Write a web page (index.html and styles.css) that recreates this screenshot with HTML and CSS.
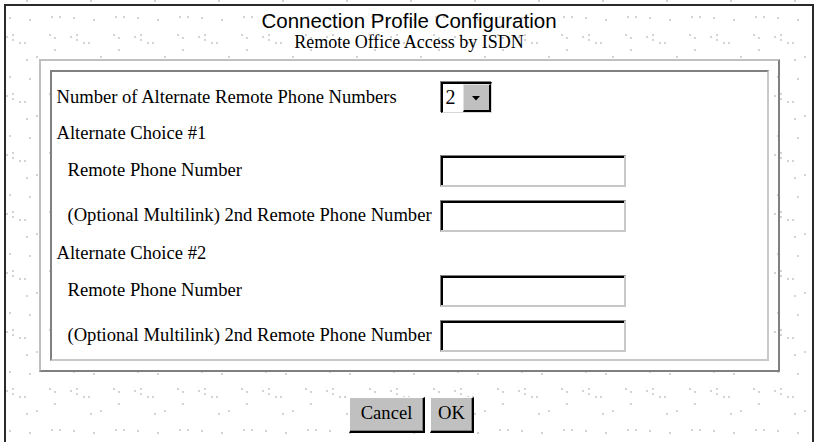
FILE: index.html
```html
<!DOCTYPE html>
<html>
<head>
<meta charset="utf-8">
<title>Connection Profile Configuration</title>
<link rel="stylesheet" href="styles.css">
</head>
<body>
<div class="frame">
  <div class="title">Connection Profile Configuration</div>
  <div class="subtitle">Remote Office Access by ISDN</div>
  <div class="outer">
    <div class="inner">
      <div class="grid">
        <div class="lbl r-sel">Number of Alternate Remote Phone Numbers</div>
        <div class="ctl">
          <div class="select">
            <span class="val">2</span>
            <span class="arrow"><svg width="8" height="5" viewBox="0 0 8 5"><path d="M0 0H8L4 4.5Z" fill="#000"/></svg></span>
          </div>
        </div>
        <div class="lbl head">Alternate Choice #1</div>
        <div class="lbl sub">Remote Phone Number</div>
        <div class="ctl"><input class="field" type="text"></div>
        <div class="lbl sub">(Optional Multilink) 2nd Remote Phone Number</div>
        <div class="ctl"><input class="field" type="text"></div>
        <div class="lbl head">Alternate Choice #2</div>
        <div class="lbl sub">Remote Phone Number</div>
        <div class="ctl"><input class="field" type="text"></div>
        <div class="lbl sub">(Optional Multilink) 2nd Remote Phone Number</div>
        <div class="ctl"><input class="field" type="text"></div>
      </div>
    </div>
  </div>
  <div class="buttons">
    <button class="btn btn-cancel" type="button">Cancel</button>
    <button class="btn btn-ok" type="button">OK</button>
  </div>
</div>
</body>
</html>
```

FILE: styles.css
```css
html, body {
  margin: 0;
  padding: 0;
  overflow: hidden;
  height: 442px;
}
body {
  background-color: #fff;
  background-image:
    radial-gradient(circle at 10px 18px, #d2d2d2 0.8px, transparent 1.3px),
    radial-gradient(circle at 30px 20px, #d2d2d2 0.8px, transparent 1.3px),
    radial-gradient(circle at 52px 17px, #d2d2d2 0.8px, transparent 1.3px),
    radial-gradient(circle at 60px 17px, #d2d2d2 0.8px, transparent 1.3px),
    radial-gradient(circle at 7px 37px, #d2d2d2 0.8px, transparent 1.3px),
    radial-gradient(circle at 13px 35px, #d2d2d2 0.8px, transparent 1.3px),
    radial-gradient(circle at 13px 40px, #d2d2d2 0.8px, transparent 1.3px),
    radial-gradient(circle at 20px 43px, #d2d2d2 0.8px, transparent 1.3px),
    radial-gradient(circle at 25px 43px, #d2d2d2 0.8px, transparent 1.3px),
    radial-gradient(circle at 50px 35px, #d2d2d2 0.8px, transparent 1.3px),
    radial-gradient(circle at 55px 38px, #d2d2d2 0.8px, transparent 1.3px),
    radial-gradient(circle at 55px 50px, #d2d2d2 0.8px, transparent 1.3px),
    radial-gradient(circle at 27px 1px, #d2d2d2 0.8px, transparent 1.3px),
    radial-gradient(circle at 37px 57px, #d2d2d2 0.8px, transparent 1.3px);
  background-size: 64px 59px;
  font-family: "Liberation Serif", "Times New Roman", serif;
  color: #000;
}
.frame {
  margin: 4px 0 0 4px;
  width: 810px;
  height: 438px;
  border: 2px solid #2a2a2a;
  border-bottom: none;
  padding-top: 4px;
  box-sizing: border-box;
  overflow: hidden;
}
.title {
  font-family: "Liberation Sans", Arial, sans-serif;
  font-size: 20.5px;
  line-height: 22px;
  text-align: center;
}
.subtitle {
  font-size: 18px;
  line-height: 20px;
  text-align: center;
}
.outer {
  width: 741px;
  box-sizing: border-box;
  margin: 7px auto 0;
  padding: 9px;
  border: 2px solid;
  border-color: #c0c0c0 #808080 #808080 #c0c0c0;
}
.inner {
  background: #fff;
  border: 2px solid;
  border-color: #808080 #c8c8c8 #c8c8c8 #808080;
  padding: 4px 5px 1px;
}
.grid {
  display: grid;
  grid-template-columns: 383px 1fr;
  grid-template-rows: 42px 30px 45px 45px 30px 45px 45px;
  align-items: center;
}
.lbl {
  font-size: 18.6px;
  line-height: 21px;
  white-space: nowrap;
  padding-bottom: 2px;
}
.head {
  grid-column: 1 / -1;
}
.sub {
  padding-left: 11px;
}
.ctl {
  display: flex;
  align-items: center;
}
.select {
  display: flex;
  width: 51px;
  height: 31px;
  box-sizing: border-box;
  border-top: 2px solid #000;
  border-left: 2px solid #000;
  border-right: 1px solid #d8d8d8;
  border-bottom: 1px solid #d8d8d8;
  box-shadow: -1px -1px 0 #808080;
  margin-left: 1px;
}
.val {
  width: 20px;
  font-size: 20px;
  line-height: 26px;
  padding-left: 3px;
  box-sizing: border-box;
  background: #fff;
}
.arrow {
  flex: 1;
  display: flex;
  align-items: center;
  justify-content: center;
  background: #c0c0c0;
  border-top: 1px solid #e0e0e0;
  border-left: 1px solid #e0e0e0;
  border-right: 2px solid #000;
  border-bottom: 2px solid #000;
}
.arrow svg {
  display: block;
  margin-top: 2px;
}
.field {
  width: 186px;
  height: 32px;
  box-sizing: border-box;
  margin: 0;
  padding: 0;
  background: #fff;
  border-style: solid;
  border-width: 1px 2px 2px 1px;
  border-color: #808080 #c8c8c8 #c8c8c8 #808080;
  box-shadow: inset 2px 2px 0 #000;
  outline: none;
}
.buttons {
  display: flex;
  justify-content: center;
  gap: 5px;
  margin-top: 25px;
  padding-left: 5px;
}
.btn {
  height: 36px;
  box-sizing: border-box;
  margin: 0;
  padding: 0 0 3px;
  background: #c0c0c0;
  font-family: "Liberation Serif", "Times New Roman", serif;
  font-size: 18.6px;
  color: #000;
  border-style: solid;
  border-width: 1px 2px 2px 1px;
  border-color: #fff #000 #000 #fff;
  box-shadow: inset -1px -1px 0 #808080;
}
.btn-cancel {
  width: 76px;
}
.btn-ok {
  width: 44px;
}
```
